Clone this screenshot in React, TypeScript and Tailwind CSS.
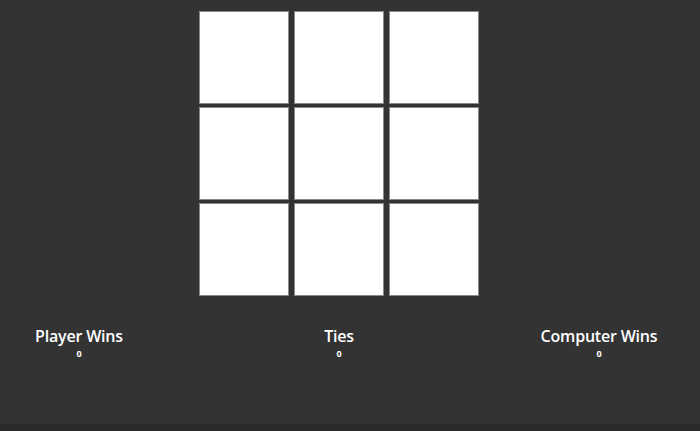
const cells = Array.from({ length: 9 }, (_, i) => i)

const scores = [
  { label: "Player Wins", value: 0, width: "w-[158px]" },
  { label: "Ties", value: 0, width: "w-[362px]" },
  { label: "Computer Wins", value: 0, width: "w-[158px]" },
]

export default function App() {
  return (
    <div
      className="flex h-[431px] w-full flex-col bg-[#333333] text-white"
      style={{ fontFamily: '"Open Sans", "Liberation Sans", sans-serif' }}
    >
      <div className="flex w-[678px] flex-1 flex-col">
        {/* Board */}
        <div className="flex justify-center pt-[11px]">
          <div className="grid grid-cols-[90px_90px_90px] grid-rows-[93px_93px_93px] gap-x-[5px] gap-y-[3px]">
            {cells.map((i) => (
              <button
                key={i}
                className="border border-[#8a8a8a] bg-white"
              />
            ))}
          </div>
        </div>

        {/* Scoreboard */}
        <div className="mt-[28px] flex">
          {scores.map((s) => (
            <div key={s.label} className={`${s.width} flex flex-col items-center`}>
              <span className="text-base font-semibold leading-6 tracking-[-0.2px]">{s.label}</span>
              <span className="text-[9px] font-bold leading-3">{s.value}</span>
            </div>
          ))}
        </div>
      </div>
      <div className="h-[7px] w-full bg-[#2a2a2a]" />
    </div>
  )
}
